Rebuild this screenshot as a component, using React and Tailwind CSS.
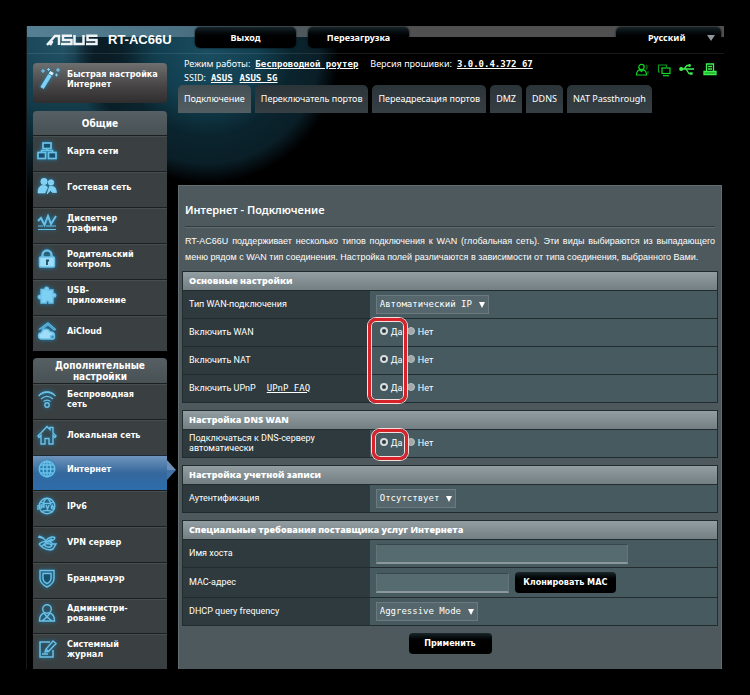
import React from 'react';

const general = [
  { id: 'map', label: 'Карта сети' },
  { id: 'guest', label: 'Гостевая сеть' },
  { id: 'traffic', label: 'Диспетчер трафика' },
  { id: 'lock', label: 'Родительский контроль' },
  { id: 'usb', label: 'USB-приложение', lines: ['USB-', 'приложение'] },
  { id: 'cloud', label: 'AiCloud' },
];

const advanced = [
  { id: 'wifi', label: 'Беспроводная сеть' },
  { id: 'home', label: 'Локальная сеть' },
  { id: 'globe', label: 'Интернет', active: true },
  { id: 'ipv6', label: 'IPv6' },
  { id: 'vpn', label: 'VPN сервер' },
  { id: 'shield', label: 'Брандмауэр' },
  { id: 'admin', label: 'Администрирование', lines: ['Администри-', 'рование'] },
  { id: 'log', label: 'Системный журнал' },
];

const shapes = {
  map: (
    <g fill="#17506a" strokeWidth="1.700">
      <rect x="6" y="2" width="8" height="5.500" />
      <rect x="1" y="11.500" width="7.500" height="6" />
      <rect x="11.500" y="11.500" width="7.500" height="6" />
      <path d="M10 7.500v2M4.500 11.500V9.500h11v2" fill="none" />
    </g>
  ),
  guest: (
    <g fill="#7fd0f5" stroke="#9fdcf8" strokeWidth="0.6">
      <circle cx="7" cy="4.500" r="3.200" />
      <circle cx="14" cy="5.500" r="2.800" />
      <path d="M1 16c0-5 1.500-7.500 5.500-7.500 2 0 3 .5 4 2L8 16zM10 17l2.500-7.500h3c2.500 0 3.500 2 4 6h-4l-2-2z" />
    </g>
  ),
  traffic: (
    <g>
      <path d="M1 8l3-3 3.500 7L11 3l3 8 5-8" strokeWidth="2" />
      <path d="M1 13h5M9 13h10M1 16.500h18" strokeWidth="1.200" />
    </g>
  ),
  lock: (
    <g>
      <path d="M5.500 9V6a4.500 4.500 0 0 1 9 0v3" strokeWidth="2.400" />
      <rect x="2.500" y="8" width="15" height="10" rx="1" fill="#9fdcf8" />
      <path d="M10 11v5M9 11.500h3" stroke="#17506a" strokeWidth="1.800" />
    </g>
  ),
  usb: (
    <path
      fill="#7fd0f5"
      d="M4 4.500h4c-1-2.500 3.500-3.500 3.500-.5L11 5h5v4c3-1.500 4 3 1 3l-1-.5V18h-4c1-3-3.500-3-2.800 0H4v-4.500c-3 1.500-4-3.500-1-3l1 .5z"
    />
  ),
  cloud: (
    <g>
      <path d="M1.500 8.500L11 1.500l8 7-2 .8-6-5.300-6 4.500" fill="#4aa6cf" strokeWidth="0.8" />
      <path d="M4 18a3.200 3.200 0 0 1 .5-6.300A4.500 4.500 0 0 1 13 11a3.500 3.500 0 0 1 4.500 3.500c0 2-1.500 3.500-3.500 3.500z" fill="#9fdcf8" />
      <circle cx="15.500" cy="16" r="2" fill="#3b8fb8" />
    </g>
  ),
  wifi: (
    <g>
      <path d="M1.500 7c5-5 12-5 17 0M4 10c4-3.500 8-3.500 12 0M6.500 12.500c2.500-2 4.500-2 7 0" />
      <path d="M3 5c5-3.500 9-3.500 14 0" strokeWidth="0.8" />
      <circle cx="10" cy="16" r="2.200" />
    </g>
  ),
  home: <path d="M1 11L10 1.500l3 3V2.500h3V8l3 3-1 1.500-2-2V19h-4v-5.500H8V19H4v-8.500l-2 2z" />,
  globe: (
    <g>
      <circle cx="10" cy="10" r="7.800" />
      <ellipse cx="10" cy="10" rx="3.800" ry="7.800" />
      <path d="M2 10h16M10 2v16M3.500 6h13M3.500 14h13" />
    </g>
  ),
  ipv6: (
    <g>
      <circle cx="10" cy="10" r="7.800" />
      <path d="M3.500 6c3 2 10 2 13 0M10 2C6 5 6 8 7 9M10 2c4 3 4 6 3 7M4 16c3-2 9-2 12 0M1 9v5M4 13V9h3v2H4M9 9l1.500 4L12 9M16 9c-2 0-2.500 4 0 4s1.500-3-1-2" />
    </g>
  ),
  vpn: (
    <g>
      <path d="M1 5l5 1 3 3M9 9c2-4 8-5 9-3-1 2-5 4-9 4zM2 12c3-3 10-4 14 0M16 12l3 0-3 5c-4 2-10 0-14-5M7 13c2-2 6-1 8 0-1 3-5 3-8 0z" />
      <path d="M6 6L2 4M5 14l6-5 4-2" />
    </g>
  ),
  shield: (
    <g>
      <path d="M3 2.500h14v8c0 4-4 7-7 8.500-3-1.500-7-4.500-7-8.500z" />
      <path d="M6 5.500h8V10c0 2.500-2 4.500-4 5.500-2-1-4-3-4-5.500z" fill="#17506a" />
    </g>
  ),
  admin: (
    <g>
      <circle cx="10" cy="6" r="4.300" />
      <path d="M7 10c-3 1-4.500 4-4.500 8h15c0-4-1.500-7-4.500-8M7 10l3 4 3-4M5 18l5-4 5 4" />
    </g>
  ),
  log: (
    <g>
      <path d="M13 3H3v15h13v-7" strokeWidth="1.500" />
      <path d="M8 13l1-3 7-8 3 2.500-7.500 8zM9 10l2.500 2.500M5 15h6" />
    </g>
  ),
};

function MenuIcon({ id }) {
  return (
    <svg
      viewBox="0 0 20 20"
      aria-hidden="true"
      className="size-5 shrink-0 drop-shadow-[0_0_2px_#1687b8]"
      fill="none"
      stroke="#6cc0e8"
      strokeWidth="1.400"
    >
      {shapes[id]}
    </svg>
  );
}

function MenuItem({ item }) {
  return (
    <a
      href="#"
      aria-current={item.active ? 'page' : undefined}
      className={
        item.active
          ? 'relative flex items-center gap-[10px] border-t border-[#1c2a38] bg-linear-to-b from-[#6f95bd] via-[#35689c] via-50% to-[#2d6cab] pb-[7px] pl-1'
          : 'relative flex items-center gap-[10px] border-t border-[#1b1f20] bg-[#3a4042] pb-[5px] pl-1 shadow-[inset_0_1px_#474e50]'
      }
    >
      <MenuIcon id={item.id} />
      <span className="w-[86px] font-bold leading-[10px]">
        {item.lines ? item.lines.map((l) => <span key={l} className="block">{l}</span>) : item.label}
      </span>
      {item.active && (
        <svg viewBox="0 0 9 20" aria-hidden="true" className="absolute left-full top-1 h-5 w-[9px]">
          <path d="M0 0L9 10H0z" fill="#6d8fb5" />
          <path d="M0 20L9 10H0z" fill="#4273a6" />
        </svg>
      )}
    </a>
  );
}

function AsusLogo() {
  return (
    <svg viewBox="0 0 52 12" role="img" aria-label="ASUS" className="h-3 w-[52px]" fill="none" stroke="#eef3f5" strokeWidth="2.500">
      <path d="M1 11L9 2H13V11M6.500 7L4 11" />
      <path d="M26 1.800H17V6H25.500V10H15" />
      <path d="M28.500 1V10H37.500V1" />
      <path d="M51.500 1.800H41.500V6H50.500V10H40" />
    </svg>
  );
}

function Choice({ name }) {
  return (
    <div className="flex items-center pl-[10px]">
      <label className="flex w-[27px] items-center gap-[3px]">
        <input
          type="radio"
          name={name}
          defaultChecked
          className="mb-[3px] size-2 shrink-0 appearance-none rounded-full border-2 border-[#d5dcde] bg-[#556065] checked:bg-[#2c3538]"
        />
        Да
      </label>
      <label className="flex items-center gap-[3px]">
        <input
          type="radio"
          name={name}
          className="mb-[3px] size-2 shrink-0 appearance-none rounded-full border border-[#b9bfc1] bg-[#a3a9ab] checked:bg-[#2c3538]"
        />
        Нет
      </label>
    </div>
  );
}

function Choose({ id, value, width }) {
  return (
    <div className="ml-[6px] grid w-fit items-center">
      <select
        id={id}
        className={`col-start-1 row-start-1 h-[19px] appearance-none border border-[#6c797d] bg-[#55676c] pl-[3px] font-['DejaVu_Sans_Mono','Liberation_Mono',monospace] text-[9px] ${width}`}
      >
        <option>{value}</option>
      </select>
      <svg viewBox="0 0 6 6" aria-hidden="true" className="pointer-events-none col-start-1 row-start-1 mr-1 size-[6px] justify-self-end">
        <path d="M0 0h6L3 6z" fill="#fff" />
      </svg>
    </div>
  );
}

function Row({ label, htmlFor, extra, height = 'h-7', children }) {
  return (
    <tr className={`border-t border-[#222b2e] ${height}`}>
      <th scope="row" className="w-[35%] bg-[#2f3a3e] pb-[2px] pl-[6px] text-left font-normal leading-[10px]">
        {htmlFor ? <label htmlFor={htmlFor}>{label}</label> : label}
        {extra}
      </th>
      <td className="bg-[#475a5f]">{children}</td>
    </tr>
  );
}

function Section({ title, children }) {
  return (
    <table className="mb-[7px] w-full border-collapse border border-[#222b2e] font-[Roboto,'Liberation_Sans',Arial,sans-serif] text-[9px]">
      <thead>
        <tr className="h-[19px] bg-linear-to-b from-[#929ea2] to-[#717d81]">
          <th colSpan="2" className="pl-[6px] text-left font-['Open_Sans','Noto_Sans',sans-serif] font-extrabold leading-3">
            {title}
          </th>
        </tr>
      </thead>
      <tbody>{children}</tbody>
    </table>
  );
}

const tabs = ['Подключение', 'Переключатель портов', 'Переадресация портов', 'DMZ', 'DDNS', 'NAT Passthrough'];

const topButton =
  'h-[21px] rounded-[5px] bg-linear-to-b from-[#17242a] to-black to-60% text-[9px] font-bold shadow-[0_0_2px_#000]';

export default function App() {
  return (
    <div className="min-h-screen bg-black px-[26px] pb-[25px] pt-[26px] font-['Noto_Sans','Open_Sans',sans-serif] text-[9px] text-white">
      <div className="border-l border-[#15181a] bg-[radial-gradient(circle_at_75px_35px,#0a1a22cc_0,#0a1a2200_40px),radial-gradient(circle_at_180px_25px,#1a4d60_0,#123f50_50px,#0a242e_85px,#0a1f28_112px,transparent_132px),radial-gradient(ellipse_at_40px_10px,#24566a_0,#123a49_80px,transparent_170px)]">
        <header className="flex h-7 items-center border-b border-[#ffffff18] bg-[linear-gradient(to_right,#558093_0,#4a7183_150px,#4f5a5e_270px,#505050_320px)] bg-[length:100%_11px] bg-no-repeat pr-[3px]">
          <div className="flex w-[168px] items-center gap-[10px] pl-[19px]">
            <AsusLogo />
            <span className="whitespace-nowrap font-['Liberation_Sans',Arial,sans-serif] text-[13px] font-bold">RT-AC66U</span>
          </div>
          <div className="flex flex-1 gap-3 pb-1">
            <button className={`w-[101px] ${topButton}`}>Выход</button>
            <button className={`w-[101px] ${topButton}`}>Перезагрузка</button>
          </div>
          <div className="grid items-center pb-1">
            <select aria-label="Язык" className={`col-start-1 row-start-1 w-[105px] appearance-none pl-8 ${topButton}`}>
              <option>Русский</option>
            </select>
            <svg viewBox="0 0 8 6" aria-hidden="true" className="pointer-events-none col-start-1 row-start-1 mr-[6px] h-[6px] w-2 justify-self-end">
              <path d="M0 0h8L4 6z" fill="#8d979b" />
            </svg>
          </div>
        </header>

        <div className="flex gap-[11px] pl-[6px] pr-[2px]">
          <nav className="w-[134px] shrink-0 pt-[9px] font-['DejaVu_Sans_Condensed','DejaVu_Sans',Verdana,sans-serif] text-[9px]">
            <a href="#" className="flex h-10 items-start gap-[6px] rounded-[4px] bg-linear-to-b from-[#6f6f70] via-[#454344] via-60% to-[#2f2d2e] pl-[6px] pt-1">
              <svg viewBox="0 0 22 24" aria-hidden="true" className="h-6 w-[22px] shrink-0 drop-shadow-[0_0_2px_#1687b8]" stroke="#7fd0f5">
                <path d="M3 21L11 8" strokeWidth="4" />
                <path d="M11.500 7.500L13 5" strokeWidth="4" stroke="#d9f3ff" />
                <path d="M2 4h4M4 2v4M8 2.500h3M9.500 1v3M17 3h4M19 1v4M16 8h3M17.500 6.500v3" strokeWidth="1" />
              </svg>
              <span className="whitespace-nowrap pt-[2px] font-bold leading-[10px]">
                Быстрая настройка
                <br />
                Интернет
              </span>
            </a>

            <section className="mt-2">
              <h2 className="flex h-6 items-center justify-center rounded-t-[4px] bg-linear-to-b from-[#566064] to-[#485154] text-[10px] font-bold">Общие</h2>
              <div className="grid h-[216px] auto-rows-fr">
                {general.map((item) => (
                  <MenuItem key={item.id} item={item} />
                ))}
              </div>
            </section>

            <section className="mt-[7px]">
              <h2 className="flex h-[25px] items-center justify-center rounded-t-[4px] bg-linear-to-b from-[#566064] to-[#485154] px-5 text-center text-[10px] font-bold leading-[11px]">
                Дополнительные настройки
              </h2>
              <div className="grid h-[286px] auto-rows-fr">
                {advanced.map((item) => (
                  <MenuItem key={item.id} item={item} />
                ))}
              </div>
            </section>
          </nav>

          <main className="flex min-w-0 flex-1 flex-col pt-[3px]">
            <div className="flex justify-between pl-[6px]">
              <div className="leading-[14px]">
                <p className="flex">
                  <span>Режим работы:</span>
                  <a href="#" className="ml-[5px] font-['DejaVu_Sans_Mono','Liberation_Mono',monospace] font-bold underline">Беспроводной роутер</a>
                  <span className="ml-3">Версия прошивки:</span>
                  <a href="#" className="ml-[5px] font-['DejaVu_Sans_Mono','Liberation_Mono',monospace] font-bold underline">3.0.0.4.372_67</a>
                </p>
                <p className="flex">
                  <span>SSID:</span>
                  <span className="ml-[5px] font-['DejaVu_Sans_Mono','Liberation_Mono',monospace] font-bold underline">ASUS</span>
                  <span className="ml-[7px] font-['DejaVu_Sans_Mono','Liberation_Mono',monospace] font-bold underline">ASUS_5G</span>
                </p>
              </div>
              <div className="flex items-start gap-2 pr-[5px] pt-[6px]">
                <svg viewBox="0 0 14 14" aria-label="Гости" role="img" className="size-[14px]" fill="none" stroke="#14d628" strokeWidth="1.200">
                  <circle cx="6.500" cy="4" r="2.700" />
                  <path d="M1.500 12h10c0-3-1-4.500-3-5.300L6.500 8.500l-2-1.800c-2 .8-3 2.300-3 5.300z" />
                  <path d="M11 2c1.500 1 1.500 3 0 4.500M13 8v3" stroke="#0b7316" />
                </svg>
                <svg viewBox="0 0 14 14" aria-label="Клиенты" role="img" className="size-[14px]" fill="none" stroke="#14d628" strokeWidth="1.200">
                  <path d="M3 9H1.500v-7H9.500V4" stroke="#0f9c1d" />
                  <rect x="5" y="5" width="8" height="5.500" />
                  <path d="M6 12.700h6" />
                </svg>
                <svg viewBox="0 0 16 14" aria-label="USB" role="img" className="h-[14px] w-4" fill="none" stroke="#3ff050" strokeWidth="1.300">
                  <path d="M1 6h14M5 6l3-3.500h2M7 6l3 4.500h2" />
                  <circle cx="2.200" cy="6" r="1.400" fill="#3ff050" />
                  <circle cx="10.500" cy="2.500" r="0.800" />
                  <path d="M11.500 10h1.500v1h-1.500z" />
                </svg>
                <svg viewBox="0 0 14 14" aria-label="Принтер" role="img" className="size-[14px]" fill="none" stroke="#3ff050" strokeWidth="1.300">
                  <path d="M3.500 8V1h7v7M5 3.500h4M5 6h4" />
                  <path d="M1 8.500h12v3H1z" fill="#1fae2d" />
                </svg>
              </div>
            </div>

            <div role="tablist" className="flex gap-1">
              {tabs.map((t, i) => (
                <button
                  key={t}
                  role="tab"
                  aria-selected={i === 0}
                  className={
                    i === 0
                      ? 'h-7 whitespace-nowrap rounded-t-[5px] bg-linear-to-b from-[#454f53] to-[#535e62] px-[6px]'
                      : 'h-7 whitespace-nowrap rounded-t-[5px] bg-linear-to-b from-[#2b3438] to-[#364044] px-[6px]'
                  }
                >
                  {t}
                </button>
              ))}
            </div>

            <div className="mt-[72px] flex flex-1 flex-col border-x border-t border-[#626d71] bg-[#4d595d] px-[3px] font-['Liberation_Sans',Arial,sans-serif] text-[9px]">
              <h1 className="mx-[3px] border-b border-[#323c40] pb-[9px] pt-4 font-['Noto_Sans','Open_Sans',sans-serif] text-[11px] font-semibold leading-[15px] shadow-[0_1px_#5f6b6f]">
                Интернет - Подключение
              </h1>
              <p className="mb-[6px] mt-[6px] px-[3px] text-justify text-[9px] leading-4">
                RT-AC66U поддерживает несколько типов подключения к WAN (глобальная сеть). Эти виды выбираются из выпадающего меню рядом с WAN тип соединения. Настройка полей различаются в зависимости от типа соединения, выбранного Вами.
              </p>

              <Section title="Основные настройки">
                <Row label="Тип WAN-подключения" htmlFor="wan-type">
                  <Choose id="wan-type" value="Автоматический IP" width="w-[113px]" />
                </Row>
                <Row label="Включить WAN">
                  <div className="relative">
                    <Choice name="wan" />
                    <div className="pointer-events-none absolute -left-[2px] -top-2 h-[85px] w-[39px] rounded-[8px] border-3 border-[#d8232a] shadow-[0_0_0_1px_#f4dede,inset_0_0_0_1px_#f4dede]" />
                  </div>
                </Row>
                <Row label="Включить NAT">
                  <Choice name="nat" />
                </Row>
                <Row
                  label="Включить UPnP"
                  extra={<a href="#" className="ml-[11px] font-['DejaVu_Sans_Mono','Liberation_Mono',monospace] text-[9px] underline">UPnP FAQ</a>}
                >
                  <Choice name="upnp" />
                </Row>
              </Section>

              <Section title="Настройка DNS WAN">
                <Row label={<span className="block w-[130px]">Подключаться к DNS-серверу автоматически</span>}>
                  <div className="relative">
                    <Choice name="dns" />
                    <div className="pointer-events-none absolute left-[2px] -top-2 h-[31px] w-[36px] rounded-[8px] border-3 border-[#d8232a] shadow-[0_0_0_1px_#f4dede,inset_0_0_0_1px_#f4dede]" />
                  </div>
                </Row>
              </Section>

              <Section title="Настройка учетной записи">
                <Row label="Аутентификация" htmlFor="auth">
                  <Choose id="auth" value="Отсутствует" width="w-20" />
                </Row>
              </Section>

              <Section title="Специальные требования поставщика услуг Интернета">
                <Row label="Имя хоста" htmlFor="host">
                  <input id="host" type="text" className="ml-[6px] block h-5 w-[252px] border border-b-2 border-[#64757a] border-b-[#8a979b] border-t-[#37474b] bg-[#566b70] px-1" />
                </Row>
                <Row label="MAC-адрес" htmlFor="mac" height="h-[30px]">
                  <div className="flex items-center gap-[6px]">
                    <input id="mac" type="text" className="ml-[6px] h-5 w-[133px] border border-b-2 border-[#64757a] border-b-[#8a979b] border-t-[#37474b] bg-[#566b70] px-1" />
                    <button className="h-[21px] w-[101px] rounded-[4px] bg-linear-to-b from-[#1b272b] to-black to-50% font-['DejaVu_Sans_Condensed','DejaVu_Sans',Verdana,sans-serif] text-[9px] font-bold">
                      Клонировать MAC
                    </button>
                  </div>
                </Row>
                <Row label="DHCP query frequency" htmlFor="dhcp">
                  <Choose id="dhcp" value="Aggressive Mode" width="w-[102px]" />
                </Row>
              </Section>

              <button className="mb-[14px] h-[21px] w-[83px] self-center rounded-[4px] bg-linear-to-b from-[#1b272b] to-black to-50% font-['DejaVu_Sans_Condensed','DejaVu_Sans',Verdana,sans-serif] text-[9px] font-bold">
                Применить
              </button>
            </div>
          </main>
        </div>
      </div>
    </div>
  );
}
